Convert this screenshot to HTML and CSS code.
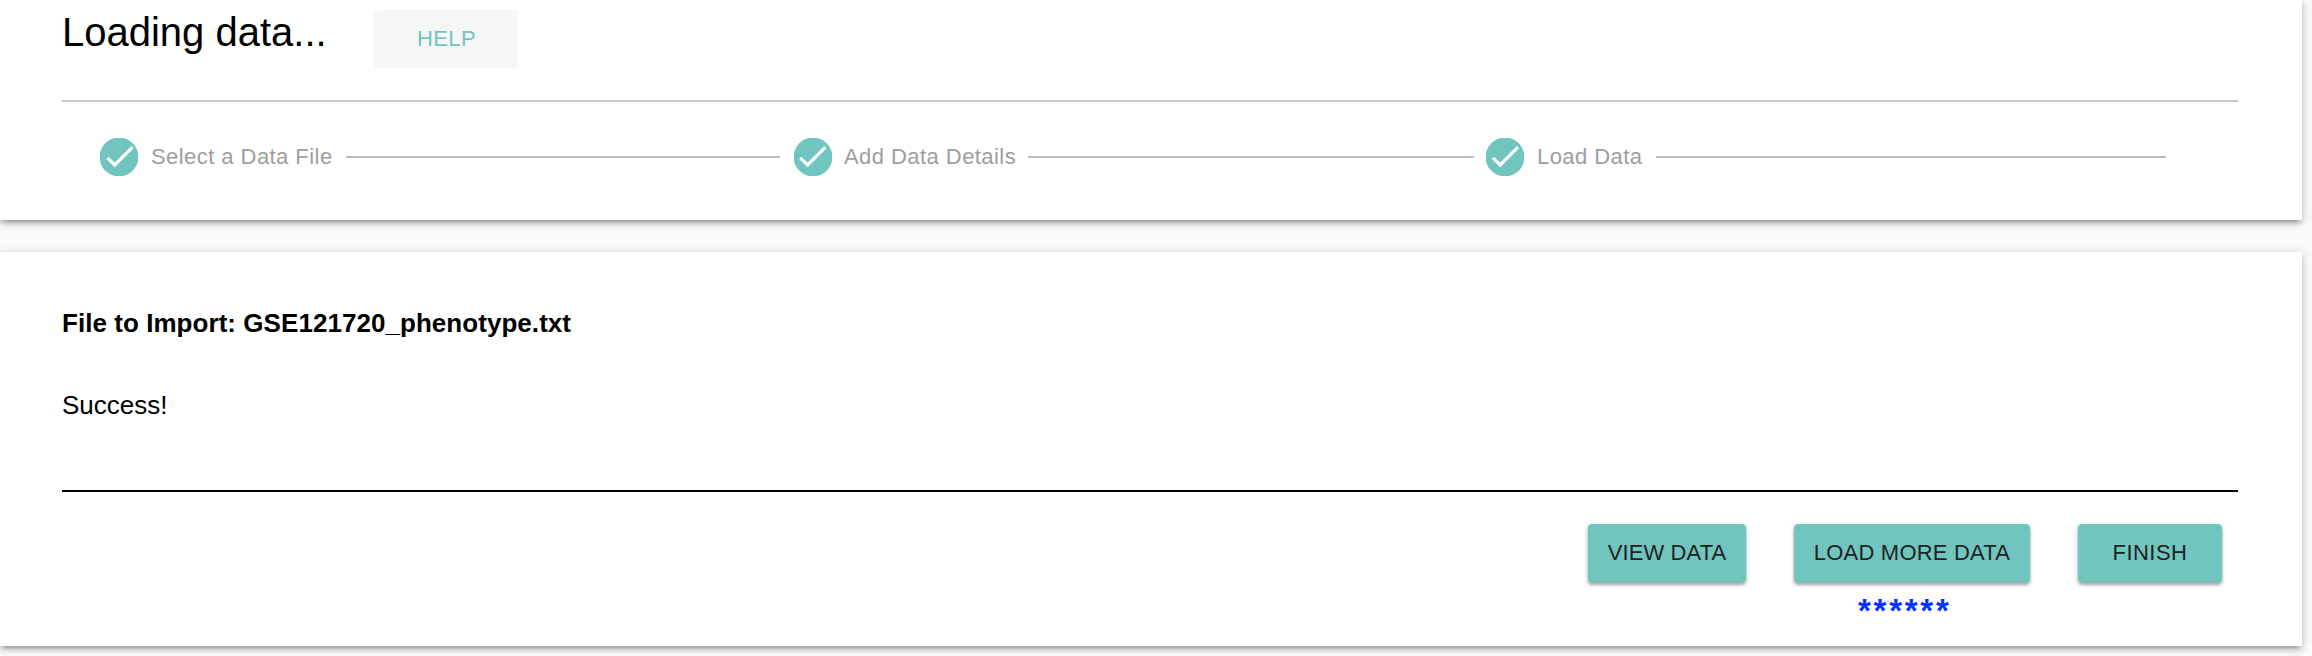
FILE: index.html
```html
<!DOCTYPE html>
<html lang="en">
<head>
<meta charset="utf-8">
<title>Loading data</title>
<link rel="stylesheet" href="styles.css">
</head>
<body>
<section class="card card-steps">
  <header class="heading">
    <h1 class="title">Loading data...</h1>
    <button class="btn btn-help">HELP</button>
  </header>
  <div class="rule rule-light"></div>
  <div class="stepper">
    <div class="step step-select">
      <svg class="check" viewBox="0 0 38 38"><circle cx="19" cy="19" r="19.4"/><path d="M7.4 19.8l7.3 7.2L32.6 9.2"/></svg>
      <span class="label">Select a Data File</span>
      <span class="line"></span>
    </div>
    <div class="step step-details">
      <svg class="check" viewBox="0 0 38 38"><circle cx="19" cy="19" r="19.4"/><path d="M6.3 19.8l7.3 7.2L31.5 9.2"/></svg>
      <span class="label">Add Data Details</span>
      <span class="line"></span>
    </div>
    <div class="step step-load">
      <svg class="check" viewBox="0 0 38 38"><circle cx="19" cy="19" r="19.4"/><path d="M6.9 19.8l7.3 7.2L32.1 9.2"/></svg>
      <span class="label">Load Data</span>
      <span class="line"></span>
    </div>
  </div>
</section>
<section class="card card-import">
  <h2 class="file">File to Import: GSE121720_phenotype.txt</h2>
  <p class="status">Success!</p>
  <div class="rule"></div>
  <div class="actions">
    <button class="btn btn-view">VIEW DATA</button>
    <div class="marked">
      <button class="btn btn-more">LOAD MORE DATA</button>
      <div class="stars">******</div>
    </div>
    <button class="btn">FINISH</button>
  </div>
</section>
</body>
</html>
```
FILE: styles.css
```css
* { box-sizing: border-box; }
body {
  margin: 0;
  height: 656px;
  overflow: hidden;
  display: flex;
  flex-direction: column;
  gap: 32px;
  background: #fafafa;
  color: #000;
  font-family: "Liberation Sans", Arial, sans-serif;
}
.card {
  width: 2302px;
  flex: none;
  padding: 0 64px 0 62px;
  background: #fff;
  box-shadow: 0 2px 10px rgba(0,0,0,.2), 0 4px 4px rgba(0,0,0,.14), 0 6px 2px -4px rgba(0,0,0,.12);
}
.card-steps { height: 220px; }
.card-import { height: 394px; padding-top: 51px; }
.heading { display: flex; height: 100px; }
.title {
  margin: 0;
  width: 312px;
  font-size: 40px;
  font-weight: 400;
  line-height: 64px;
}
.rule { height: 2px; background: #000; }
.rule-light { background: #c9c9c9; }
.btn {
  display: block;
  flex: none;
  width: 144px;
  height: 58px;
  padding: 0;
  border: 0;
  border-radius: 4px;
  background: #70c6be;
  color: #212121;
  font-family: inherit;
  font-size: 22px;
  line-height: 58px;
  letter-spacing: .44px;
  white-space: nowrap;
  box-shadow: 0 2px 5px rgba(0,0,0,.2), 0 3px 3px rgba(0,0,0,.24);
}
.btn-help {
  margin-top: 10px;
  padding-left: 1px;
  background: #f6f6f6;
  color: #70c6be;
  box-shadow: none;
}
.btn-view { width: 158px; letter-spacing: .1px; }
.btn-more { width: 236px; letter-spacing: .2px; }
.stepper {
  display: flex;
  height: 110px;
  padding: 0 72px 0 38px;
}
.step { display: flex; align-items: center; flex: none; }
.step-select { width: 694px; padding-right: 14px; }
.step-details { width: 692px; padding-right: 12px; }
.step-load { width: 680px; }
.check { width: 38px; height: 38px; flex: none; overflow: hidden; }
.check circle { fill: #70c6be; }
.check path { fill: none; stroke: #fff; stroke-width: 3.3; }
.label {
  padding-left: 13px;
  color: #9e9e9e;
  font-size: 22px;
  line-height: 38px;
  letter-spacing: .44px;
  white-space: nowrap;
}
.step-select .label { width: 208px; }
.step-details .label { width: 196px; padding-left: 12px; }
.step-load .label { width: 132px; }
.line { flex: 1; height: 2px; background: #bdbdbd; }
.file {
  margin: 0;
  font-size: 26px;
  font-weight: 700;
  line-height: 40px;
  letter-spacing: .05px;
}
.status {
  margin: 42px 0 65px;
  font-size: 26px;
  line-height: 40px;
}
.actions {
  display: flex;
  justify-content: flex-end;
  gap: 48px;
  padding: 32px 16px 0 0;
}
.stars {
  padding-left: 64px;
  margin-top: 6px;
  color: #0433ff;
  font-size: 33px;
  font-weight: 700;
  line-height: 46px;
  letter-spacing: 2.75px;
}
```
